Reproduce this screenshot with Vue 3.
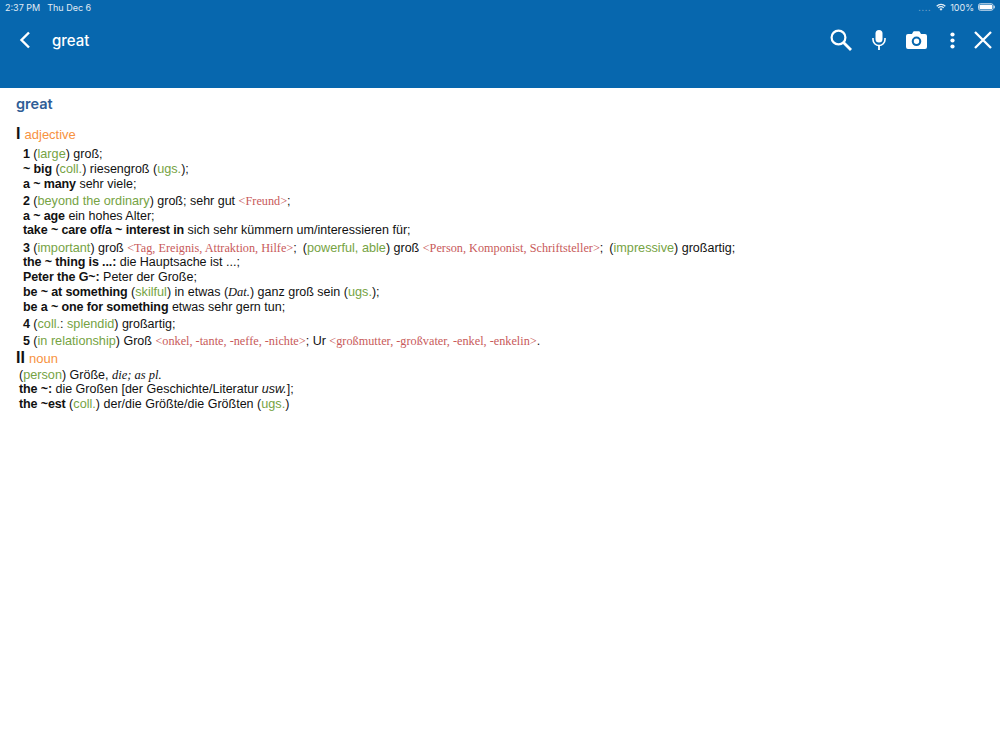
<script setup>
</script>

<template>
  <div class="page">
    <header class="top">
      <div class="status">
        <div class="st-left"><span>2:37 PM</span><span>Thu Dec 6</span></div>
        <div class="st-right">
          <span class="signal">....</span>
          <svg class="wifi" width="10" height="8" viewBox="0 0 12 9"><path d="M0.3 3A8 8 0 0 1 11.7 3L10.6 4.2A6.4 6.4 0 0 0 1.4 4.2Z M2.2 5A5.2 5.2 0 0 1 9.8 5L8.7 6.1A3.6 3.6 0 0 0 3.3 6.1Z M4.1 7A2.6 2.6 0 0 1 7.9 7L6 9Z" fill="#e4eef6"/></svg>
          <span>100%</span>
          <svg width="17" height="8" viewBox="0 0 18 8"><rect x=".5" y=".5" width="15.5" height="7" rx="2" fill="none" stroke="#cfe0ef"/><rect x="1.5" y="1.5" width="13.5" height="5" rx="1" fill="#fff"/><rect x="16.6" y="2.6" width="1.2" height="2.8" fill="#cfe0ef"/></svg>
        </div>
      </div>
      <div class="bar">
        <svg class="back" width="12" height="18" viewBox="0 0 12 18"><path d="M10 1.5L2.5 9L10 16.5" fill="none" stroke="#fff" stroke-width="2.4"/></svg>
        <span class="q">great</span>
        <div class="icons">
          <svg width="22" height="22" viewBox="0 0 22 22"><circle cx="8.5" cy="8.5" r="6.9" fill="none" stroke="#fff" stroke-width="2.2"/><path d="M13.5 13.5L21 21" stroke="#fff" stroke-width="2.8"/></svg>
          <svg width="14" height="20" viewBox="0 0 14 20"><rect x="3.5" y="0" width="7" height="12.5" rx="3.5" fill="#fff"/><path d="M1 8V9.5A6 6 0 0 0 13 9.5V8" fill="none" stroke="#fff" stroke-width="1.6"/><path d="M7 15V20" stroke="#fff" stroke-width="1.8"/></svg>
          <svg width="21" height="18" viewBox="0 0 21 18"><path fill-rule="evenodd" d="M2 3H6L7.2 .8Q7.5 .3 8 .3H13Q13.5 .3 13.8 .8L15 3H19Q21 3 21 5V16Q21 18 19 18H2Q0 18 0 16V5Q0 3 2 3ZM10.5 5.5A4.8 4.8 0 1 0 10.5 15.1A4.8 4.8 0 1 0 10.5 5.5ZM10.5 7.6A2.7 2.7 0 1 1 10.5 13A2.7 2.7 0 1 1 10.5 7.6Z" fill="#fff"/></svg>
          <svg class="dots" width="5" height="17" viewBox="0 0 5 17"><circle cx="2.5" cy="2.5" r="2.1" fill="#fff"/><circle cx="2.5" cy="8.5" r="2.1" fill="#fff"/><circle cx="2.5" cy="14.5" r="2.1" fill="#fff"/></svg>
          <svg class="close" width="18" height="18" viewBox="0 0 18 18"><path d="M1 1L17 17M17 1L1 17" stroke="#fff" stroke-width="2.3"/></svg>
        </div>
      </div>
    </header>
    <main class="content">
      <h1>great</h1>
      <div class="pos first"><b class="rom">I</b> <span class="or">adjective</span></div>
      <div class="sense">
        <p><b>1</b> (<i class="gr">large</i>) groß;</p>
        <p><b>~ big</b> (<i class="gr">coll.</i>) riesengroß (<i class="gr">ugs.</i>);</p>
        <p><b>a ~ many</b> sehr viele;</p>
      </div>
      <div class="sense">
        <p><b>2</b> (<i class="gr">beyond the ordinary</i>) groß; sehr gut <span class="red">&lt;Freund&gt;</span>;</p>
        <p><b>a ~ age</b> ein hohes Alter;</p>
        <p><b>take ~ care of/a ~ interest in</b> sich sehr kümmern um/interessieren für;</p>
      </div>
      <div class="sense">
        <p><b>3</b> (<i class="gr">important</i>) groß <span class="red">&lt;Tag, Ereignis, Attraktion, Hilfe&gt;</span><span class="sep">; </span>(<i class="gr">powerful, able</i>) groß <span class="red">&lt;Person, Komponist, Schriftsteller&gt;</span><span class="sep">; </span>(<i class="gr">impressive</i>) großartig;</p>
        <p><b>the ~ thing is ...:</b> die Hauptsache ist ...;</p>
        <p><b>Peter the G~:</b> Peter der Große;</p>
        <p><b>be ~ at something</b> (<i class="gr">skilful</i>) in etwas (<em class="ser">Dat.</em>) ganz groß sein (<i class="gr">ugs.</i>);</p>
        <p><b>be a ~ one for something</b> etwas sehr gern tun;</p>
      </div>
      <div class="sense">
        <p><b>4</b> (<i class="gr">coll.</i>: <i class="gr">splendid</i>) großartig;</p>
      </div>
      <div class="sense last">
        <p><b>5</b> (<i class="gr">in relationship</i>) Groß <span class="red">&lt;onkel, -tante, -neffe, -nichte&gt;</span>; Ur <span class="red">&lt;großmutter, -großvater, -enkel, -enkelin&gt;</span>.</p>
      </div>
      <div class="pos"><b class="rom">II</b> <span class="or">noun</span></div>
      <div class="sub">
        <p>(<i class="gr">person</i>) Größe, <em class="ser">die; as pl.</em></p>
        <p><b>the ~:</b> die Großen [der Geschichte/Literatur <em>usw.</em>];</p>
        <p><b>the ~est</b> (<i class="gr">coll.</i>) der/die Größte/die Größten (<i class="gr">ugs.</i>)</p>
      </div>
    </main>
  </div>
</template>

<style scoped>
.page { width: 1000px; height: 750px; background: #fff; font-family: "Liberation Sans", Arial, sans-serif; color: #111; overflow: hidden; }
.top { height: 88px; background: #0767ae; color: #fff; box-sizing: border-box; }
.status { height: 14px; padding: 0 5px; display: flex; justify-content: space-between; align-items: center; font-size: 9px; color: #e0ebf4; font-family: Inter, sans-serif; }
.st-left { display: flex; gap: 7px; }
.st-right { display: flex; align-items: center; gap: 4px; }
.signal { color: #6f9fc8; letter-spacing: 0.6px; margin-right: 1px; }
.wifi { margin-left: 0; }
.bar { display: flex; align-items: center; height: 24px; margin-top: 14px; padding-left: 19px; padding-right: 8px; }
.back { display: block; }
.q { margin-left: 21px; font: 500 15px Inter, sans-serif; color: #fff; }
.icons { margin-left: auto; display: flex; align-items: center; gap: 20px; }
.dots { margin-left: 3px; }
.close { margin-left: -1px; }
.content { padding: 0 16px; font-size: 12.5px; line-height: 15px; }
h1 { margin: 0; padding-top: 7px; height: 22px; box-sizing: content-box; font: 600 14.5px/18px Inter, sans-serif; color: #2f5d96; }
.pos { line-height: 16px; }
.pos.first { margin-top: 9px; margin-bottom: 4px; }
.rom { font-size: 16px; letter-spacing: 0; }
.or { color: #f7923e; font-size: 13px; margin-left: 0.6px; }
p { margin: 0; line-height: 14.75px; }
.sense { padding-left: 7px; margin-bottom: 2.6px; }
.sense.last { margin-bottom: 1px; }
.sub { padding-left: 3px; margin-top: 0.5px; }
b { font-weight: 700; letter-spacing: -0.12px; }
.gr { color: #76a344; font-style: normal; font-size: 12.7px; }
.red { color: #c85a5a; font-family: "Liberation Serif", serif; font-size: 12.25px; }
.sep { word-spacing: 2.5px; }
.ser { font-family: "Liberation Serif", serif; font-size: 12.5px; font-style: italic; }
</style>
